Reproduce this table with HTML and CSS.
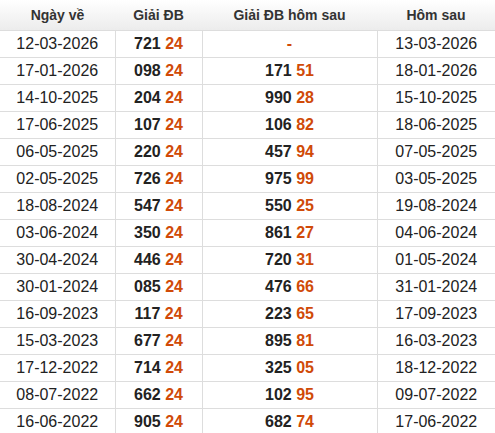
FILE: index.html
```html
<!DOCTYPE html>
<html>
<head>
<meta charset="utf-8">
<link rel="stylesheet" href="styles.css">
</head>
<body>
<table class="tbl">
<colgroup>
<col class="c1"><col class="c2"><col class="c3"><col class="c4">
</colgroup>
<thead>
<tr><th>Ngày về</th><th>Giải ĐB</th><th>Giải ĐB hôm sau</th><th>Hôm sau</th></tr>
</thead>
<tbody>
<tr><td>12-03-2026</td><td class="n">721 <span class="o">24</span></td><td class="n"><span class="o">-</span></td><td>13-03-2026</td></tr>
<tr><td>17-01-2026</td><td class="n">098 <span class="o">24</span></td><td class="n">171 <span class="o">51</span></td><td>18-01-2026</td></tr>
<tr><td>14-10-2025</td><td class="n">204 <span class="o">24</span></td><td class="n">990 <span class="o">28</span></td><td>15-10-2025</td></tr>
<tr><td>17-06-2025</td><td class="n">107 <span class="o">24</span></td><td class="n">106 <span class="o">82</span></td><td>18-06-2025</td></tr>
<tr><td>06-05-2025</td><td class="n">220 <span class="o">24</span></td><td class="n">457 <span class="o">94</span></td><td>07-05-2025</td></tr>
<tr><td>02-05-2025</td><td class="n">726 <span class="o">24</span></td><td class="n">975 <span class="o">99</span></td><td>03-05-2025</td></tr>
<tr><td>18-08-2024</td><td class="n">547 <span class="o">24</span></td><td class="n">550 <span class="o">25</span></td><td>19-08-2024</td></tr>
<tr><td>03-06-2024</td><td class="n">350 <span class="o">24</span></td><td class="n">861 <span class="o">27</span></td><td>04-06-2024</td></tr>
<tr><td>30-04-2024</td><td class="n">446 <span class="o">24</span></td><td class="n">720 <span class="o">31</span></td><td>01-05-2024</td></tr>
<tr><td>30-01-2024</td><td class="n">085 <span class="o">24</span></td><td class="n">476 <span class="o">66</span></td><td>31-01-2024</td></tr>
<tr><td>16-09-2023</td><td class="n">117 <span class="o">24</span></td><td class="n">223 <span class="o">65</span></td><td>17-09-2023</td></tr>
<tr><td>15-03-2023</td><td class="n">677 <span class="o">24</span></td><td class="n">895 <span class="o">81</span></td><td>16-03-2023</td></tr>
<tr><td>17-12-2022</td><td class="n">714 <span class="o">24</span></td><td class="n">325 <span class="o">05</span></td><td>18-12-2022</td></tr>
<tr><td>08-07-2022</td><td class="n">662 <span class="o">24</span></td><td class="n">102 <span class="o">95</span></td><td>09-07-2022</td></tr>
<tr><td>16-06-2022</td><td class="n">905 <span class="o">24</span></td><td class="n">682 <span class="o">74</span></td><td>17-06-2022</td></tr>
</tbody>
</table>
</body>
</html>
```
FILE: styles.css
```css
html, body {
  margin: 0;
  padding: 0;
  background: #fff;
}
body {
  font-family: "Liberation Sans", Arial, sans-serif;
  color: #222;
}
.tbl {
  width: 495px;
  border-collapse: collapse;
  table-layout: fixed;
}
.c1 { width: 115px; }
.c2 { width: 87px; }
.c3 { width: 175px; }
.c4 { width: 118px; }
.tbl th {
  height: 30px;
  padding: 0;
  font-size: 14px;
  font-weight: bold;
  color: #333;
  text-align: center;
  vertical-align: middle;
  background: linear-gradient(#ffffff, #ececec);
  border-bottom: 1px solid #ddd;
}
.tbl td {
  height: 26px;
  padding: 0;
  font-size: 16px;
  text-align: center;
  vertical-align: middle;
  border: 1px solid #ddd;
}
.tbl tr td:first-child { border-left: none; }
.tbl tr td:last-child { border-right: none; }
.tbl tbody tr:first-child td { border-top: none; }
.tbl .n {
  font-weight: bold;
  color: #222;
}
.tbl .o {
  color: #d04a08;
}
```
